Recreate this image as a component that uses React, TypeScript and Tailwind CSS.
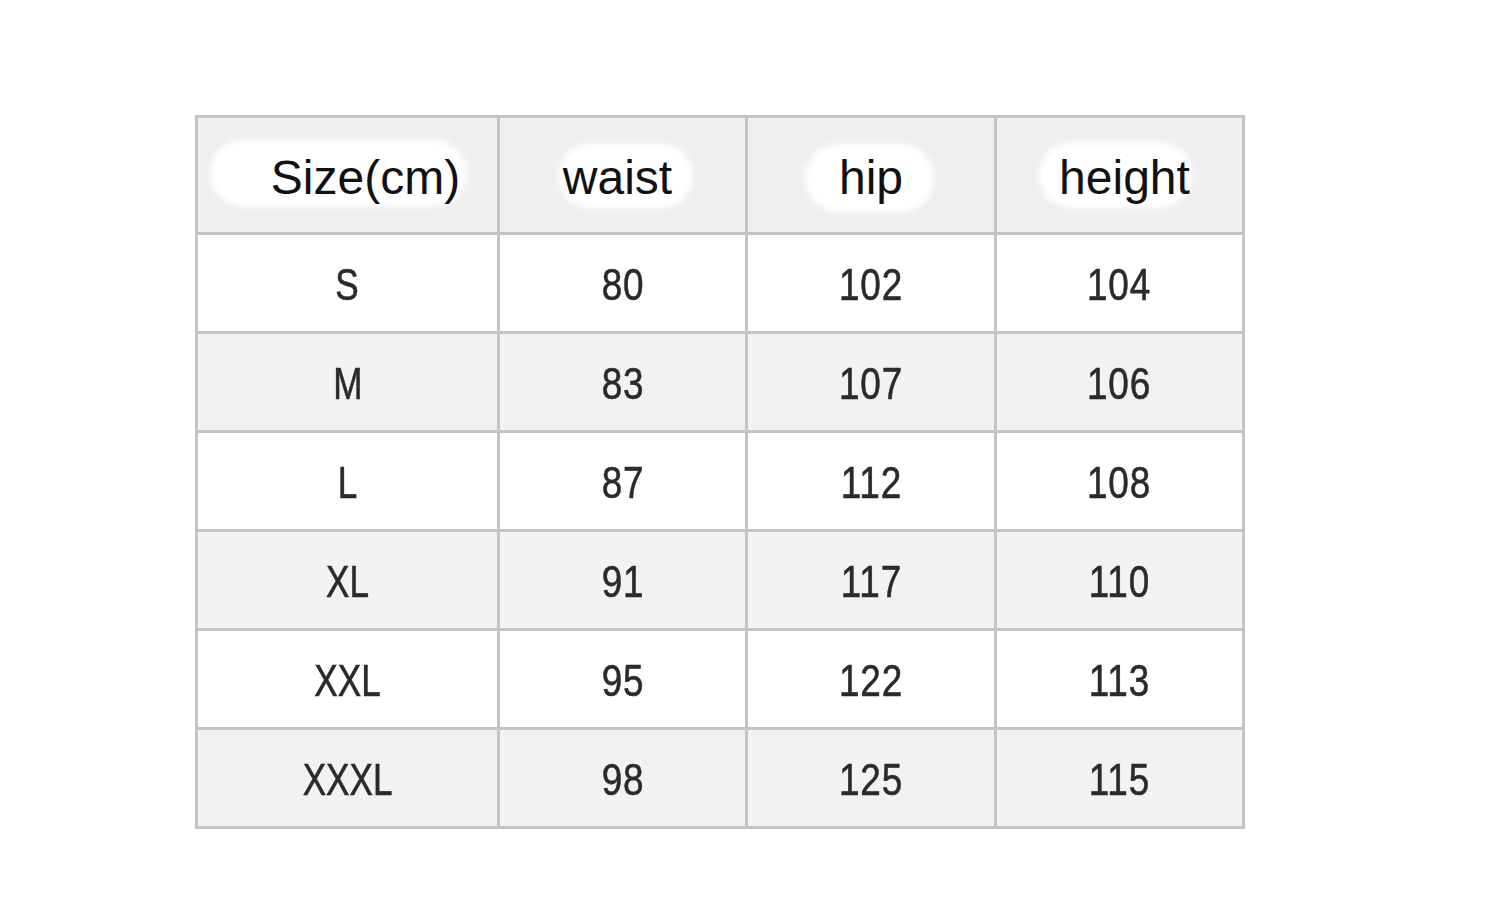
const headers = ["Size(cm)", "waist", "hip", "height"];

const rows: string[][] = [
  ["S", "80", "102", "104"],
  ["M", "83", "107", "106"],
  ["L", "87", "112", "108"],
  ["XL", "91", "117", "110"],
  ["XXL", "95", "122", "113"],
  ["XXXL", "98", "125", "115"],
];

// white smudges behind the header labels
const blobs = [
  "left-[12px] right-[30px] top-[22px] bottom-[26px]",
  "left-[58px] right-[52px] top-[26px] bottom-[24px]",
  "left-[57px] right-[60px] top-[26px] bottom-[20px]",
  "left-[42px] right-[50px] top-[24px] bottom-[24px]",
];

const headerPad = ["pl-[36px]", "pr-[10px]", "", "pl-[10px]"];

export default function App() {
  return (
    <div className="min-h-[913px] w-full bg-white" style={{ fontFamily: '"Liberation Sans", Arial, sans-serif' }}>
      <div className="pl-[195px] pt-[115px]">
        <div className="grid w-max grid-cols-[299px_245px_246px_245px] grid-rows-[114px_repeat(6,96px)] gap-[3px] bg-[#c4c4c4] p-[3px]">
          {headers.map((h, i) => (
            <div key={h} className="relative flex items-center justify-center bg-[#efefef] pt-[6px]">
              <div className={`absolute rounded-[40px] bg-white blur-[3px] ${blobs[i]}`} />
              <span className={`relative text-[48px] leading-none text-[#111] ${headerPad[i]}`}>{h}</span>
            </div>
          ))}
          {rows.map((r, ri) =>
            r.map((c, ci) => (
              <div
                key={`${ri}-${ci}`}
                className={`flex items-center justify-center pt-[2px] ${ri % 2 === 1 ? "bg-[#f2f2f2]" : "bg-white"} ${ci === 1 ? "pl-[2px]" : ""}`}
              >
                <span
                  className={`inline-block text-[45px] leading-none text-[#2a2a2a] [-webkit-text-stroke:0.6px_#2a2a2a] ${
                    ci === 0 ? "scale-x-[0.78]" : "scale-x-[0.82] tracking-[1px]"
                  }`}
                >
                  {c}
                </span>
              </div>
            ))
          )}
        </div>
      </div>
    </div>
  );
}
